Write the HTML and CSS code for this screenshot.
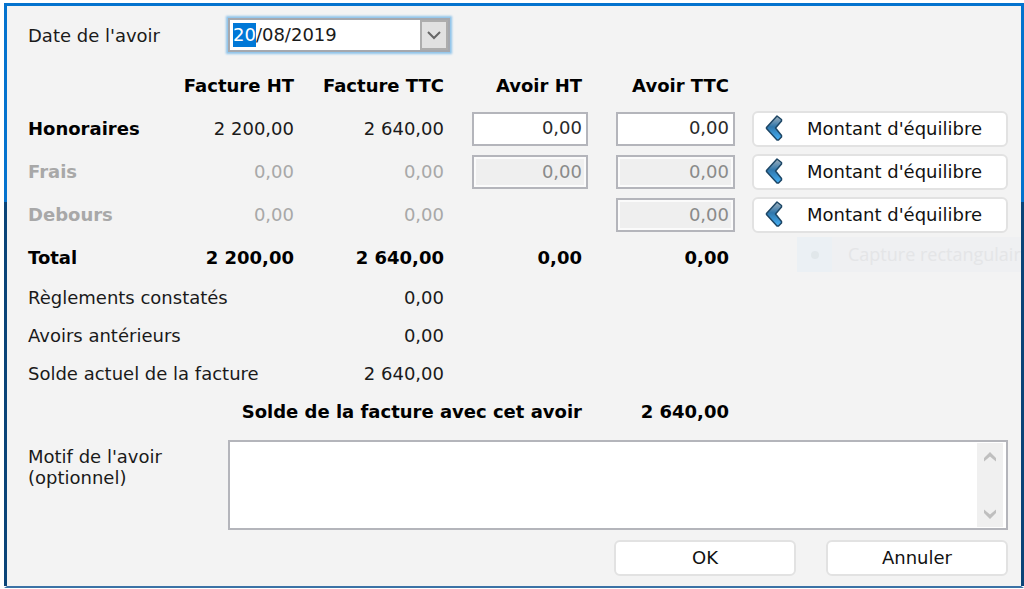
FILE: index.html
```html
<!DOCTYPE html>
<html lang="fr">

<head>
    <meta charset="UTF-8">
    <meta name="viewport" content="width=device-width, initial-scale=1.0">
    <title>Avoir</title>
    <link rel="stylesheet" href="styles.css">
</head>

<body>
    <form class="dialog">
        <div class="date-row">
            <label class="side-label" for="date">Date de l'avoir</label>
            <div class="date-box">
                <input type="text" id="date" class="date-input" value="20/08/2019">
                <button type="button" class="date-btn" aria-label="Ouvrir le calendrier">
                    <svg width="14" height="9" viewBox="0 0 14 9"><path d="M1 1 L7 7 L13 1" fill="none" stroke="#666" stroke-width="2"/></svg>
                </button>
            </div>
        </div>

        <svg class="defs" width="0" height="0">
            <defs>
                <linearGradient id="blue" x1="0" y1="0" x2="0" y2="1">
                    <stop offset="0" stop-color="#a3b2bd"/>
                    <stop offset="0.45" stop-color="#2f76ab"/>
                    <stop offset="1" stop-color="#45b0f5"/>
                </linearGradient>
                <symbol id="arrow" viewBox="0 0 18 26">
                    <path d="M12 1 L16.500 4.500 V6 L10.500 13 L16.500 20.500 V22 L13.500 25 H12 L1.500 13.500 V12.500 Z" fill="url(#blue)" stroke="#1d4665" stroke-width="1.500" stroke-linejoin="round"/>
                </symbol>
            </defs>
        </svg>

        <table class="amounts">
            <colgroup>
                <col class="col-label">
                <col class="col-fht">
                <col class="col-fttc">
                <col class="col-aht">
                <col class="col-attc">
                <col>
            </colgroup>
            <tr>
                <td></td>
                <th>Facture HT</th>
                <th>Facture TTC</th>
                <th class="credit">Avoir HT</th>
                <th class="credit">Avoir TTC</th>
                <td></td>
            </tr>
            <tr>
                <th class="label">Honoraires</th>
                <td>2 200,00</td>
                <td>2 640,00</td>
                <td class="field"><input type="text" class="amount" value="0,00" aria-label="Honoraires avoir HT"></td>
                <td class="field"><input type="text" class="amount" value="0,00" aria-label="Honoraires avoir TTC"></td>
                <td class="action"><button type="button" class="btn balance"><svg class="arrow"><use href="#arrow"/></svg>Montant d'équilibre</button></td>
            </tr>
            <tr class="off">
                <th class="label">Frais</th>
                <td>0,00</td>
                <td>0,00</td>
                <td class="field"><input type="text" class="amount" value="0,00" aria-label="Frais avoir HT" disabled></td>
                <td class="field"><input type="text" class="amount" value="0,00" aria-label="Frais avoir TTC" disabled></td>
                <td class="action"><button type="button" class="btn balance"><svg class="arrow"><use href="#arrow"/></svg>Montant d'équilibre</button></td>
            </tr>
            <tr class="off">
                <th class="label">Debours</th>
                <td>0,00</td>
                <td>0,00</td>
                <td></td>
                <td class="field"><input type="text" class="amount" value="0,00" aria-label="Debours avoir TTC" disabled></td>
                <td class="action"><button type="button" class="btn balance"><svg class="arrow"><use href="#arrow"/></svg>Montant d'équilibre</button></td>
            </tr>
            <tr class="total">
                <th class="label">Total</th>
                <td>2 200,00</td>
                <td>2 640,00</td>
                <td class="credit">0,00</td>
                <td class="credit">0,00</td>
                <td class="ghost-cell">
                    <div class="ghost">
                        <span class="ghost-mark"></span>
                        <span class="ghost-text">Capture rectangulair</span>
                    </div>
                </td>
            </tr>
            <tr class="short">
                <td class="label" colspan="2">Règlements constatés</td>
                <td>0,00</td>
            </tr>
            <tr class="short">
                <td class="label" colspan="2">Avoirs antérieurs</td>
                <td>0,00</td>
            </tr>
            <tr class="short">
                <td class="label" colspan="2">Solde actuel de la facture</td>
                <td>2 640,00</td>
            </tr>
            <tr class="short">
                <th class="credit" colspan="4">Solde de la facture avec cet avoir</th>
                <th class="credit">2 640,00</th>
            </tr>
        </table>

        <div class="reason-row">
            <label class="side-label" for="reason">Motif de l'avoir<br>(optionnel)</label>
            <div class="reason-box">
                <textarea id="reason" class="reason"></textarea>
                <div class="scrollbar">
                    <svg width="12" height="10" viewBox="0 0 12 10"><path d="M0 9.500 V6 L6 0 L12 6 V9.500 L6 4.500 Z" fill="#bfbfbf"/></svg>
                    <svg width="12" height="10" viewBox="0 0 12 10"><path d="M0 0.500 V4 L6 10 L12 4 V0.500 L6 5.500 Z" fill="#bfbfbf"/></svg>
                </div>
            </div>
        </div>

        <div class="btn-box">
            <button type="button" class="btn">OK</button>
            <button type="button" class="btn">Annuler</button>
        </div>
    </form>
    <script>
        // select the day part of the date
        const dateInput = document.querySelector('.date-input');
        dateInput.focus();
        dateInput.setSelectionRange(0, 2);
    </script>
</body>

</html>
```
FILE: styles.css
```css
* {
    box-sizing: border-box;
}

body {
    margin: 0;
    padding: 3px 0 1px 4px;
    background-color: #fff;
    color: #1a1a1a;
    font-family: "DejaVu Sans", Verdana, sans-serif;
    font-size: 18px;
    line-height: 21px;
}

input,
button,
textarea {
    font: inherit;
    color: inherit;
    margin: 0;
}

.dialog {
    position: relative;
    overflow: hidden;
    padding: 11px 13px 10px 21px;
    border: 3px solid transparent;
    border-bottom: 2px solid #3c72a5;
    background:
        linear-gradient(#f3f3f3, #f3f3f3) padding-box,
        linear-gradient(#0473ce 199px, #0a4478 199px) border-box;
}

.defs {
    position: absolute;
}

.side-label {
    flex: 0 0 200px;
}

.date-row {
    display: flex;
    align-items: center;
    height: 36px;
    margin-bottom: 11px;
}

.date-box {
    display: flex;
    width: 222px;
    height: 34px;
    border: 2px solid #a5a8ae;
    background-color: #fff;
    box-shadow: 0 0 2px 2px #8fc3ea;
}

.date-input {
    flex: 1;
    min-width: 0;
    padding: 0 0 0 3px;
    border: 0;
    outline: 0;
    background: none;
    line-height: 24px;
}

.date-input::selection {
    background-color: #0078d7;
    color: #fff;
}

.date-btn {
    width: 28px;
    padding: 0;
    border: 2px solid #adadad;
    background-color: #e1e1e1;
    display: flex;
    align-items: center;
    justify-content: center;
}

.amounts {
    width: 100%;
    table-layout: fixed;
    border-collapse: collapse;
}

.col-label {
    width: 150px;
}

.col-fht {
    width: 116px;
}

.col-fttc {
    width: 150px;
}

.col-aht {
    width: 144px;
}

.col-attc {
    width: 147px;
}

.amounts tr {
    height: 43px;
}

.amounts .total {
    height: 42px;
}

.amounts .short {
    height: 38px;
}

.amounts th,
.amounts td {
    padding: 0;
    text-align: right;
    white-space: nowrap;
}

.amounts th,
.total {
    color: #000;
    font-weight: bold;
}

.amounts .label {
    text-align: left;
}

.amounts .credit {
    padding-right: 6px;
}

.amounts .field {
    padding-left: 28px;
}

.amounts .action {
    padding: 1px 0 0 17px;
}

.off td,
.amounts .off th {
    color: #a8a8a8;
}

.amount {
    display: block;
    width: 100%;
    height: 34px;
    padding: 0 4px 2px;
    border: 2px solid #b4b5bb;
    background-color: #fff;
    color: #2a2a2a;
    text-align: right;
}

.amount:disabled {
    padding-bottom: 0;
    background-color: #efefef;
    box-shadow: inset 0 0 0 2px #fbfbfb;
    color: #8a8a8a;
}

.btn {
    width: 182px;
    height: 36px;
    padding: 0 0 2px;
    border: 2px solid #e2e2e2;
    border-radius: 6px;
    background-color: #fff;
    color: #111;
}

.balance {
    display: flex;
    align-items: center;
    gap: 24px;
    width: 100%;
    padding-left: 11px;
}

.arrow {
    width: 18px;
    height: 26px;
}

/* leftover of the capture menu, fading out over the dialog */
.ghost-cell {
    position: relative;
}

.ghost {
    position: absolute;
    top: 1px;
    left: 62px;
    display: flex;
    align-items: center;
    height: 35px;
    background-color: #eff0f2;
    font-family: "Open Sans", "Noto Sans", sans-serif;
    font-weight: normal;
    color: #e4e5e7;
}

.ghost-mark {
    display: flex;
    align-items: center;
    justify-content: center;
    width: 35px;
    height: 35px;
    margin-right: 16px;
    background-color: #ebf0f4;
}

.ghost-mark::before {
    content: "";
    width: 8px;
    height: 8px;
    border-radius: 50%;
    background-color: #e1e7ea;
}

.reason-row {
    display: flex;
    margin-top: 10px;
}

.reason-row .side-label {
    padding-top: 6px;
}

.reason-box {
    flex: 1;
    display: flex;
    height: 90px;
    padding: 1px 3px 1px 1px;
    border: 2px solid #b4b5bb;
    background-color: #fff;
}

.reason {
    flex: 1;
    border: 0;
    outline: 0;
    resize: none;
    background: none;
}

.scrollbar {
    width: 26px;
    padding: 9px 0 8px;
    background-color: #f0f0f0;
    display: flex;
    flex-direction: column;
    justify-content: space-between;
    align-items: center;
}

.btn-box {
    display: flex;
    justify-content: flex-end;
    gap: 30px;
    margin-top: 10px;
}
```
